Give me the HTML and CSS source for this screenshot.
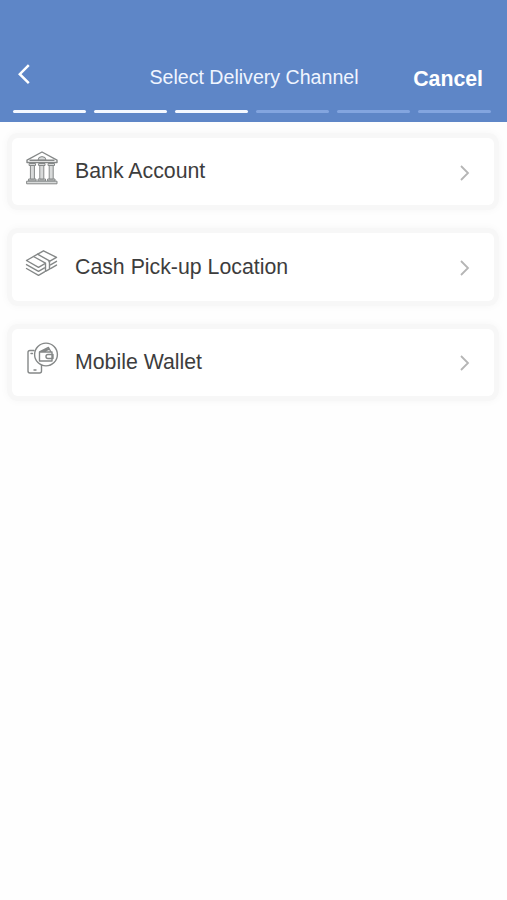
FILE: index.html
```
<!DOCTYPE html>
<html lang="en">
<head>
  <meta charset="UTF-8">
  <meta name="viewport" content="width=device-width, initial-scale=1">
  <title>Select Delivery Channel</title>
  <link rel="stylesheet" href="styles.css">
</head>
<body>
  <header class="header">
    <div class="nav">
      <button class="back" aria-label="Back">
        <svg width="14" height="22" viewBox="0 0 14 22"><path d="M11.8 2.2 2.8 11.2l9 9"/></svg>
      </button>
      <h1>Select Delivery Channel</h1>
      <button class="cancel">Cancel</button>
    </div>
    <div class="steps">
      <span class="done"></span>
      <span class="done"></span>
      <span class="done"></span>
      <span></span>
      <span></span>
      <span></span>
    </div>
  </header>

  <main class="channels">
    <a class="card">
      <!-- bank -->
      <svg class="icon" width="34" height="36" viewBox="0 0 34 36">
        <path d="M2 10.2 17 2l15 8.2v2.3H2z"/>
        <path class="fill" d="M13 9.8a4 3.200 0 0 1 8 0z"/>
        <path d="M5 10.200h24"/>
        <path class="fill" d="M4.500 13.500h6v2h-6zM14 13.500h6v2h-6zM23.500 13.500h6v2h-6zM4 29h7v2H4zM13.500 29h7v2h-7zM23 29h7v2h-7z"/>
        <path class="fill" d="M5.800 15.500h3.600V29H5.800zM15.200 15.500h3.600V29h-3.600zM24.600 15.500h3.600V29h-3.600z"/>
        <path class="fill" d="M2 31.200h30v2.600H2z"/>
      </svg>
      <span class="name">Bank Account</span>
      <svg class="arrow" width="12" height="18" viewBox="0 0 12 18"><path d="m2 2 7 7-7 7"/></svg>
    </a>
    <a class="card">
      <!-- banknotes -->
      <svg class="icon" width="34" height="36" viewBox="0 0 34 36">
        <path d="M1.500 14.500 18.500 4.800l13 6.600-7.500 4.300M1.500 14.500l12 6.800 6-3.500"/>
        <path d="m8.500 10.500 12 6.600v8.300l4-2.300v-8.300L12.500 8.200"/>
        <path d="m1.500 18.600 12 6.800 6-3.500M1.500 22.500l12 6.800 6-3.500M25.500 18.800l6-3.500M25.500 22.600l6-3.500"/>
      </svg>
      <span class="name">Cash Pick-up Location</span>
      <svg class="arrow" width="12" height="18" viewBox="0 0 12 18"><path d="m2 2 7 7-7 7"/></svg>
    </a>
    <a class="card">
      <!-- phone with a wallet bubble -->
      <svg class="icon" width="34" height="36" viewBox="0 0 34 36">
        <path d="M9 9.500H5a2 2 0 0 0-2 2v18.500a2 2 0 0 0 2 2h9.500a2 2 0 0 0 2-2v-5.500M9 29h2M6 12.500h1.500"/>
        <circle cx="21" cy="13.500" r="11.400"/>
        <path d="M14.500 11h12.500v9H14.500zM14.500 11l9-4.500 2.500 4.500M18 10.500l5.500-2M28 13.500h-5a2 2 0 0 0 0 4h5z"/>
      </svg>
      <span class="name">Mobile Wallet</span>
      <svg class="arrow" width="12" height="18" viewBox="0 0 12 18"><path d="m2 2 7 7-7 7"/></svg>
    </a>
  </main>
</body>
</html>
```

FILE: styles.css
```
* { box-sizing: border-box; }
body { margin: 0; min-height: 100vh; background: #fefefe; color: #3d3d3d; font-family: "Liberation Sans", Arial, sans-serif; }
svg { display: block; flex: none; fill: none; }

.header { height: 122px; padding: 52px 16px 9px 13px; background: #5e86c7; color: #fff; display: flex; flex-direction: column; justify-content: space-between; }
.nav { display: grid; grid-template-columns: 100px 1fr 100px; align-items: center; height: 50px; padding-left: 4px; }
.nav h1 { margin: 0; color: #f0f5ff; font-size: 19.6px; font-weight: 400; line-height: 24px; text-align: center; white-space: nowrap; }
.nav button { padding: 0; border: none; background: none; color: #fff; font-family: inherit; cursor: pointer; }
.back { justify-self: start; margin-top: -6px; }
.back svg { stroke: #fff; stroke-width: 2.5; }
.nav .cancel { justify-self: end; padding: 4px 8px 0 0; font-size: 21.3px; font-weight: 700; line-height: 24px; }
.steps { display: flex; gap: 7.500px; }
.steps span { flex: 1; height: 3px; border-radius: 2px; background: #83a5df; }
.steps .done { background: #f4f8ff; }

.channels { display: flex; flex-direction: column; gap: 28px; padding: 16px 13px 24px 12px; }
.card { display: flex; align-items: center; height: 67.400px; padding: 0 23px 0 13px; border-radius: 6px; background: #fff; box-shadow: 0 0 0 5px #f7f7f7, 0 0 8px 5px #f7f7f7; }
.icon { margin: -7px 16px 0 0; stroke: #858888; stroke-width: 1.4; stroke-linejoin: round; stroke-linecap: round; }
.icon .fill { fill: #d8dada; stroke-width: 1; }
.name { flex: 1; margin-top: -1px; font-size: 21.300px; line-height: 26px; }
.arrow { margin-top: 2px; stroke: #b5b5b5; stroke-width: 1.8; }
```
